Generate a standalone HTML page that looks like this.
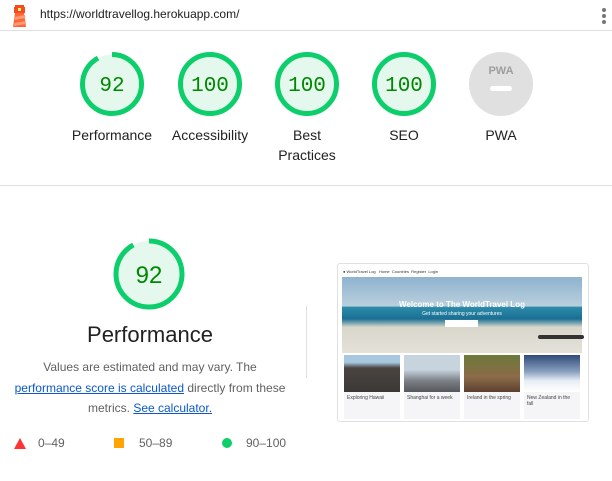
<!DOCTYPE html>
<html><head><meta charset="utf-8"><style>
*{margin:0;padding:0;box-sizing:border-box}
body{width:612px;height:481px;background:#fff;font-family:"Liberation Sans",Arial,sans-serif;color:#212121;position:relative;overflow:hidden}
.hdr{position:absolute;left:0;top:0;width:612px;height:31px;border-bottom:1px solid #e0e0e0}
.url{position:absolute;left:40px;top:7px;font-size:12px;color:#212121}
.dots{position:absolute;left:602px;top:8px}
.dots i{display:block;width:4px;height:4px;border-radius:2px;background:#757575;margin-bottom:2px}
.g{position:absolute;text-align:center}
.lab{position:absolute;width:110px;text-align:center;font-size:14px;line-height:20px;color:#212121}
.hr{position:absolute;left:0;top:185px;width:612px;height:1px;background:#e0e0e0}
.vr{position:absolute;left:306px;top:306px;width:1px;height:72px;background:#e0e0e0}
.ptitle{position:absolute;left:40px;width:220px;top:322px;text-align:center;font-size:22px;color:#212121}
.desc{position:absolute;left:8px;width:284px;top:357px;text-align:center;font-size:12px;line-height:20.5px;color:#616161}
.desc a{color:#1a73e8;color:#0b57d0;text-decoration:underline}
.leg{position:absolute;top:436px;font-size:12px;color:#616161}
.shot{position:absolute;left:337px;top:263px;width:252px;height:159px;border:1px solid #e0e0e0;border-radius:3px;background:#fff;overflow:hidden}
</style></head><body>
<div class="hdr">
<svg style="position:absolute;left:11px;top:3px" width="18" height="24" viewBox="0 0 18 24">
<rect x="4" y="2" width="9" height="2" fill="#f44b21"/>
<rect x="3" y="4" width="11" height="6" fill="#f44b21"/>
<rect x="7" y="5" width="3" height="3" fill="#fff176"/>
<path d="M4 10 L13 10 L15 24 L2 24 Z" fill="#f63"/>
<path d="M4 14 L14 12 L14.3 15 L3.6 17 Z M3.2 20 L14.7 18 L15 21 L2.8 23 Z" fill="#ff9a7a"/>
</svg>
<div class="url">https://worldtravellog.herokuapp.com/</div>
<div class="dots"><i></i><i></i><i></i></div>
</div>

<svg style="position:absolute;left:0;top:40px" width="612" height="90">
<g font-family="Liberation Mono,monospace" font-size="21" fill="#008800" text-anchor="middle">
<circle cx="112" cy="44" r="29.5" fill="#e5f8ee"/>
<circle cx="112" cy="44" r="29.5" fill="none" stroke="#0cce6b" stroke-width="5" stroke-dasharray="170.5 200" transform="rotate(-90 112 44)"/>
<text x="112" y="51">92</text>
<circle cx="210" cy="44" r="29.5" fill="#e5f8ee" stroke="#0cce6b" stroke-width="5"/>
<text x="210" y="51">100</text>
<circle cx="307" cy="44" r="29.5" fill="#e5f8ee" stroke="#0cce6b" stroke-width="5"/>
<text x="307" y="51">100</text>
<circle cx="404" cy="44" r="29.5" fill="#e5f8ee" stroke="#0cce6b" stroke-width="5"/>
<text x="404" y="51">100</text>
</g>
<circle cx="501" cy="44" r="32" fill="#e0e0e0"/>
<text x="501" y="34" font-family="Liberation Sans,sans-serif" font-weight="bold" font-size="11" fill="#9e9e9e" text-anchor="middle">PWA</text>
<rect x="490" y="46" width="22" height="5" rx="2.5" fill="#fff"/>
</svg>
<div class="lab" style="left:57px;top:125px">Performance</div>
<div class="lab" style="left:155px;top:125px">Accessibility</div>
<div class="lab" style="left:252px;top:125px">Best<br>Practices</div>
<div class="lab" style="left:349px;top:125px">SEO</div>
<div class="lab" style="left:446px;top:125px">PWA</div>
<div class="hr"></div>

<svg style="position:absolute;left:110px;top:235px" width="80" height="80">
<circle cx="39" cy="39" r="33" fill="#e5f8ee"/>
<circle cx="39" cy="39" r="33" fill="none" stroke="#0cce6b" stroke-width="5" stroke-dasharray="190.7 220" transform="rotate(-90 39 39)"/>
<text x="39" y="48" font-family="Liberation Sans,sans-serif" font-size="24" fill="#008800" text-anchor="middle">92</text>
</svg>
<div class="ptitle">Performance</div>
<div class="desc">Values are estimated and may vary. The <a>performance score is calculated</a> directly from these metrics. <a>See calculator.</a></div>
<div class="vr"></div>
<svg style="position:absolute;left:14px;top:438px" width="12" height="11"><path d="M6 0 L12 11 L0 11Z" fill="#ff3333"/></svg>
<div class="leg" style="left:38px">0–49</div>
<div style="position:absolute;left:114px;top:438px;width:10px;height:10px;background:#ffa400"></div>
<div class="leg" style="left:139px">50–89</div>
<div style="position:absolute;left:222px;top:438px;width:10px;height:10px;border-radius:5px;background:#0cce6b"></div>
<div class="leg" style="left:246px">90–100</div>

<div class="shot">
<div style="position:absolute;left:5px;top:5px;font-size:4px;color:#333">&#9679; WorldTravel Log &nbsp; Home &nbsp;Countries &nbsp;Register &nbsp;Login</div>
<div style="position:absolute;left:4px;top:13px;width:240px;height:76px;background:linear-gradient(#8fb3cf 0%,#b9cfdd 38%,#2c8aa8 40%,#1a6f94 55%,#d9d6cc 66%,#e4e1d8 100%)"></div>
<div style="position:absolute;left:4px;top:36px;width:240px;text-align:center;font-size:8px;font-weight:bold;color:#fff">Welcome to The WorldTravel Log</div>
<div style="position:absolute;left:4px;top:47px;width:240px;text-align:center;font-size:5px;color:#fff">Get started sharing your adventures</div>
<div style="position:absolute;left:107px;top:56px;width:33px;height:7px;background:#fff"></div>
<div style="position:absolute;left:200px;top:71px;width:46px;height:4px;border-radius:3px;background:#333"></div>
<div style="position:absolute;left:6px;top:91px;width:56px;height:64px;background:#f5f5f7"><div style="height:37px;background:linear-gradient(#a8c8e0 20%,#4a4440 35%,#3a3836)"></div><div style="font-size:5px;color:#444;padding:3px">Exploring Hawaii</div></div>
<div style="position:absolute;left:66px;top:91px;width:56px;height:64px;background:#f5f5f7"><div style="height:37px;background:linear-gradient(#c7d3dd 40%,#7b7f86 70%,#55585c)"></div><div style="font-size:5px;color:#444;padding:3px">Shanghai for a week</div></div>
<div style="position:absolute;left:126px;top:91px;width:56px;height:64px;background:#f5f5f7"><div style="height:37px;background:linear-gradient(#6b7a3a,#8b6a48 60%,#5a4030)"></div><div style="font-size:5px;color:#444;padding:3px">Ireland in the spring</div></div>
<div style="position:absolute;left:186px;top:91px;width:56px;height:64px;background:#f5f5f7"><div style="height:37px;background:linear-gradient(#2f4a78,#8aa0c0 45%,#e8eef5 70%,#ffffff)"></div><div style="font-size:5px;color:#444;padding:3px">New Zealand in the fall</div></div>
</div>
</body></html>
